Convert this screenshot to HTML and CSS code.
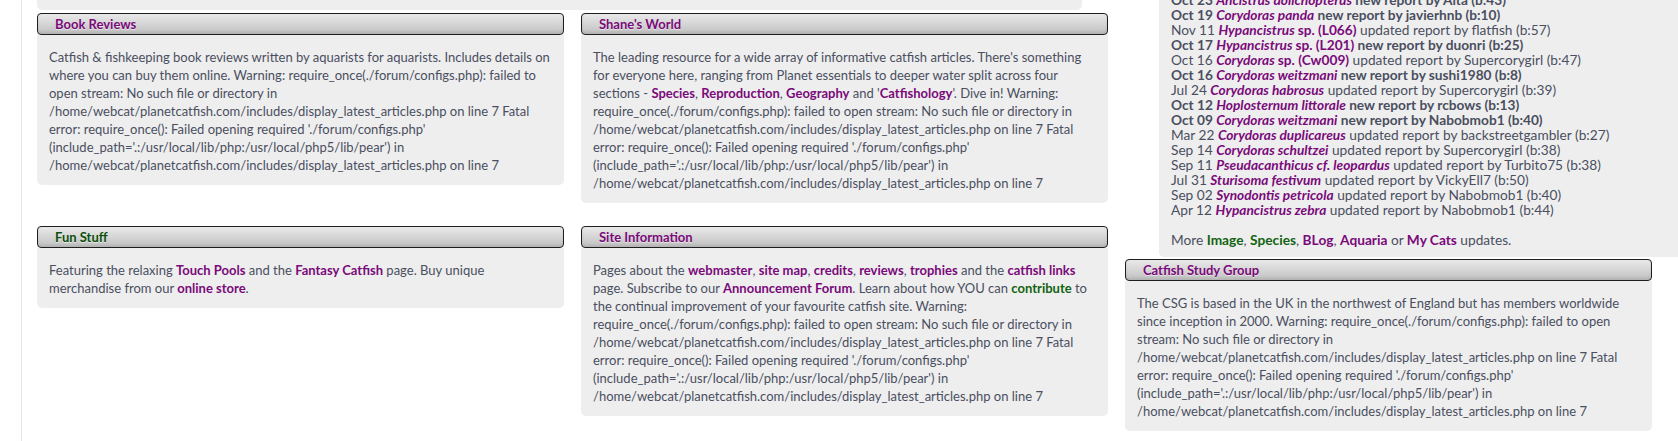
FILE: index.html
```html
<!DOCTYPE html>
<html lang="en">
<head>
<meta charset="utf-8">
<title>Planet Catfish</title>
<link rel="stylesheet" href="styles.css">
</head>
<body>
<div class="frame">
  <div class="main">
    <div class="strip">
      <p class="strip-text">Browse the <a class="lk" href="#">Cat-eLog</a> by <a class="lk" href="#">family</a>, <a class="lk" href="#">geography</a> or <a class="lk" href="#">spotting guide</a>, or try our <a class="lk" href="#">catfish query</a> and <a class="lk" href="#">photography</a> pages for every species you may keep.</p>
    </div>
    <div class="grid">
      <section class="box">
        <h2 class="hd">Book Reviews</h2>
        <div class="bd">Catfish &amp; fishkeeping book reviews written by aquarists for aquarists. Includes details on where you can buy them online. Warning: require_once(./forum/configs.php): failed to open stream: No such file or directory in /home/webcat/planetcatfish.com/includes/display_latest_articles.php on line 7 Fatal error: require_once(): Failed opening required './forum/configs.php' (include_path='.:/usr/local/lib/php:/usr/local/php5/lib/pear') in /home/webcat/planetcatfish.com/includes/display_latest_articles.php on line 7</div>
      </section>
      <section class="box">
        <h2 class="hd">Shane's World</h2>
        <div class="bd">The leading resource for a wide array of informative catfish articles. There's something for everyone here, ranging from Planet essentials to deeper water split across four sections - <a class="lk" href="#">Species</a>, <a class="lk" href="#">Reproduction</a>, <a class="lk" href="#">Geography</a> and '<a class="lk" href="#">Catfishology</a>'. Dive in! Warning: require_once(./forum/configs.php): failed to open stream: No such file or directory in /home/webcat/planetcatfish.com/includes/display_latest_articles.php on line 7 Fatal error: require_once(): Failed opening required './forum/configs.php' (include_path='.:/usr/local/lib/php:/usr/local/php5/lib/pear') in /home/webcat/planetcatfish.com/includes/display_latest_articles.php on line 7</div>
      </section>
      <section class="box">
        <h2 class="hd hd-green">Fun Stuff</h2>
        <div class="bd">Featuring the relaxing <a class="lk" href="#">Touch Pools</a> and the <a class="lk" href="#">Fantasy Catfish</a> page. Buy unique merchandise from our <a class="lk" href="#">online store</a>.</div>
      </section>
      <section class="box">
        <h2 class="hd">Site Information</h2>
        <div class="bd">Pages about the <a class="lk" href="#">webmaster</a>, <a class="lk" href="#">site map</a>, <a class="lk" href="#">credits</a>, <a class="lk" href="#">reviews</a>, <a class="lk" href="#">trophies</a> and the <a class="lk" href="#">catfish links</a> page. Subscribe to our <a class="lk" href="#">Announcement Forum</a>. Learn about how YOU can <a class="lk lk-green" href="#">contribute</a> to the continual improvement of your favourite catfish site. Warning: require_once(./forum/configs.php): failed to open stream: No such file or directory in /home/webcat/planetcatfish.com/includes/display_latest_articles.php on line 7 Fatal error: require_once(): Failed opening required './forum/configs.php' (include_path='.:/usr/local/lib/php:/usr/local/php5/lib/pear') in /home/webcat/planetcatfish.com/includes/display_latest_articles.php on line 7</div>
      </section>
    </div>
  </div>
  <div class="side">
    <div class="reports">
      <div class="rep new">Oct 23 <a class="sp" href="#">Ancistrus dolichopterus</a> new report by Alta (b:43)</div>
      <div class="rep new">Oct 19 <a class="sp" href="#">Corydoras panda</a> new report by javierhnb (b:10)</div>
      <div class="rep">Nov 11 <a class="sp" href="#">Hypancistrus <span class="up">sp. (L066)</span></a> updated report by flatfish (b:57)</div>
      <div class="rep new">Oct 17 <a class="sp" href="#">Hypancistrus <span class="up">sp. (L201)</span></a> new report by duonri (b:25)</div>
      <div class="rep">Oct 16 <a class="sp" href="#">Corydoras <span class="up">sp. (Cw009)</span></a> updated report by Supercorygirl (b:47)</div>
      <div class="rep new">Oct 16 <a class="sp" href="#">Corydoras weitzmani</a> new report by sushi1980 (b:8)</div>
      <div class="rep">Jul 24 <a class="sp" href="#">Corydoras habrosus</a> updated report by Supercorygirl (b:39)</div>
      <div class="rep new">Oct 12 <a class="sp" href="#">Hoplosternum littorale</a> new report by rcbows (b:13)</div>
      <div class="rep new">Oct 09 <a class="sp" href="#">Corydoras weitzmani</a> new report by Nabobmob1 (b:40)</div>
      <div class="rep">Mar 22 <a class="sp" href="#">Corydoras duplicareus</a> updated report by backstreetgambler (b:27)</div>
      <div class="rep">Sep 14 <a class="sp" href="#">Corydoras schultzei</a> updated report by Supercorygirl (b:38)</div>
      <div class="rep">Sep 11 <a class="sp" href="#">Pseudacanthicus cf. leopardus</a> updated report by Turbito75 (b:38)</div>
      <div class="rep">Jul 31 <a class="sp" href="#">Sturisoma festivum</a> updated report by VickyEll7 (b:50)</div>
      <div class="rep">Sep 02 <a class="sp" href="#">Synodontis petricola</a> updated report by Nabobmob1 (b:40)</div>
      <div class="rep">Apr 12 <a class="sp" href="#">Hypancistrus zebra</a> updated report by Nabobmob1 (b:44)</div>
      <p class="more">More <a class="lk lk-green" href="#">Image</a>, <a class="lk lk-green" href="#">Species</a>, <a class="lk" href="#">BLog</a>, <a class="lk" href="#">Aquaria</a> or <a class="lk" href="#">My Cats</a> updates.</p>
    </div>
    <section class="box">
      <h2 class="hd">Catfish Study Group</h2>
      <div class="bd">The CSG is based in the UK in the northwest of England but has members worldwide since inception in 2000. Warning: require_once(./forum/configs.php): failed to open stream: No such file or directory in /home/webcat/planetcatfish.com/includes/display_latest_articles.php on line 7 Fatal error: require_once(): Failed opening required './forum/configs.php' (include_path='.:/usr/local/lib/php:/usr/local/php5/lib/pear') in /home/webcat/planetcatfish.com/includes/display_latest_articles.php on line 7</div>
    </section>
  </div>
</div>
</body>
</html>
```

FILE: styles.css
```css
html, body {
  margin: 0;
  padding: 0;
  background: #ffffff;
  overflow: hidden;
}

body {
  font-family: Lato, "Open Sans", "Liberation Sans", sans-serif;
  font-size: 13px;
  color: #4a4e5f;
}

.frame {
  display: flex;
  align-items: flex-start;
  gap: 17px;
  margin-left: 21px;
  padding-left: 15px;
  border-left: 1px solid #e4e4e4;
  min-height: 441px;
  box-sizing: border-box;
}

.main {
  width: 1071px;
  flex: none;
}

.strip {
  width: 1045px;
  margin-top: -16px;
  background: #eeeeee;
  border-radius: 0 0 5px 5px;
  padding: 0 12px 8px;
  box-sizing: border-box;
}

.strip-text {
  margin: 0;
  line-height: 18px;
  white-space: nowrap;
  overflow: hidden;
}

.grid {
  display: grid;
  grid-template-columns: 527px 527px;
  column-gap: 17px;
  row-gap: 23px;
  margin-top: 3px;
}

.box {
  width: 527px;
}

.hd {
  margin: 0;
  height: 20px;
  line-height: 20px;
  padding-left: 17px;
  border: 1px solid #1e1e1e;
  border-radius: 4px;
  background: linear-gradient(#e9e9e9 0%, #d3d3d3 55%, #c0c0c0 100%);
  box-shadow: inset 0 -2px 3px rgba(0, 0, 0, 0.08);
  font-size: 13px;
  font-weight: bold;
  color: #7a0a7a;
  text-shadow: 0 1px 0 rgba(255, 255, 255, 0.5);
}

.hd-green {
  color: #0d4f0d;
}

.bd {
  background: #eeeeee;
  padding: 13px 12px 11px;
  line-height: 18px;
  font-size: 13px;
  border-radius: 0 0 5px 5px;
}

.lk {
  color: #7a0a7a;
  font-weight: bold;
  text-decoration: none;
}

.lk-green {
  color: #126312;
}

.side {
  width: 527px;
  flex: none;
  display: flex;
  flex-direction: column;
  align-items: flex-start;
  margin-top: -18px;
}

.reports {
  width: 560px;
  margin-left: 34px;
  background: #eeeeee;
  padding: 10px 12px;
  box-sizing: border-box;
  border-bottom-left-radius: 5px;
  font-size: 13.7px;
  line-height: 15px;
  margin-bottom: 2px;
}

.rep {
  white-space: nowrap;
}

.rep.new {
  font-weight: bold;
}

.sp {
  color: #7a0a7a;
  font-weight: bold;
  font-style: italic;
  text-decoration: none;
}

.sp .up {
  font-style: normal;
}

.more {
  margin: 15px 0 0;
}
```
